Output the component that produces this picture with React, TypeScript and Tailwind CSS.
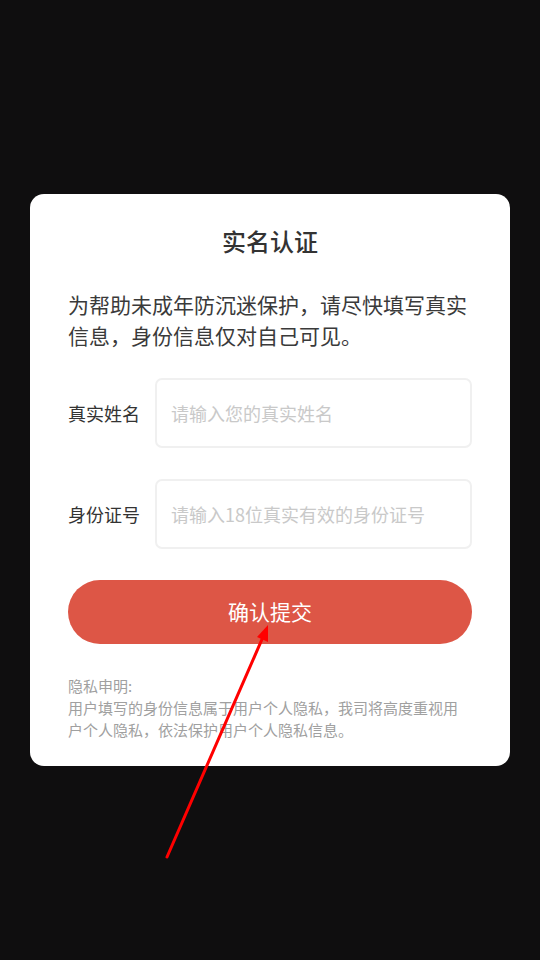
import React, { useState } from 'react';

const font = { fontFamily: '"Noto Sans CJK SC", "Noto Sans", sans-serif' };

const Field: React.FC<{ label: string; placeholder: string; value: string; onChange: (v: string) => void }> = ({ label, placeholder, value, onChange }) => (
    <div className="flex items-center">
        <label className="w-[87px] shrink-0 text-[18px] text-[#333333]">{label}</label>
        <input
            type="text"
            value={value}
            onChange={(e) => onChange(e.target.value)}
            placeholder={placeholder}
            className="h-[70px] flex-1 min-w-0 rounded-[7px] border-2 border-[#f0f0f0] px-[14px] text-[18px] text-[#333333] outline-none placeholder:text-[#c9c9c9]"
        />
    </div>
);

const App: React.FC = () => {
    const [name, setName] = useState('');
    const [idNo, setIdNo] = useState('');

    return (
        <div className="relative flex h-screen items-center justify-center bg-[#0f0e0f] px-[30px]" style={font}>
            <div className="w-full rounded-[14px] bg-white px-[38px] pt-[31px] pb-[25px]">
                <h1 className="text-center text-[24px] leading-[32px] font-medium text-[#333333]">实名认证</h1>

                <p className="mt-[32px] text-[21px] leading-[31px] text-[#3a3a3a]">
                    为帮助未成年防沉迷保护，请尽快填写真实信息，身份信息仅对自己可见。
                </p>

                <div className="mt-[27px] flex flex-col gap-[31px]">
                    <Field label="真实姓名" placeholder="请输入您的真实姓名" value={name} onChange={setName} />
                    <Field label="身份证号" placeholder="请输入18位真实有效的身份证号" value={idNo} onChange={setIdNo} />
                </div>

                <button className="mt-[31px] h-[64px] w-full rounded-full bg-[#dd5646] text-[21px] text-white">
                    确认提交
                </button>

                <div className="mt-[31px] text-[15px] leading-[22px] text-[#a0a0a0]">
                    <p>隐私申明:</p>
                    <p>用户填写的身份信息属于用户个人隐私，我司将高度重视用户个人隐私，依法保护用户个人隐私信息。</p>
                </div>
            </div>

            {/* annotation arrow */}
            <svg className="pointer-events-none absolute inset-0 h-full w-full" viewBox="0 0 540 960">
                <line x1="167" y1="857" x2="263" y2="637" stroke="#ff0000" strokeWidth="3" strokeLinecap="round" />
                <polygon points="268,625 268,642 257,637" fill="#ff0000" />
            </svg>
        </div>
    );
};

export default App;
